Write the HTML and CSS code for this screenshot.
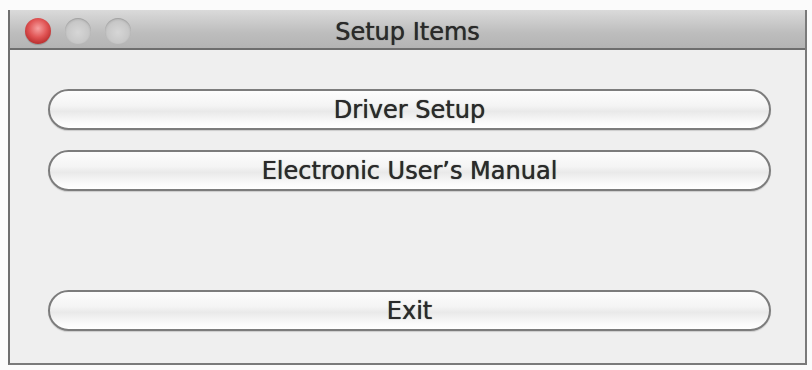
FILE: index.html
```html
<!DOCTYPE html>
<html>
<head>
<meta charset="utf-8">
<link rel="stylesheet" href="styles.css">
</head>
<body>
<div class="window">
  <div class="titlebar">
    <div class="lights">
      <span class="light close"></span>
      <span class="light off"></span>
      <span class="light off"></span>
    </div>
    <div class="title">Setup Items</div>
  </div>
  <div class="content">
    <div class="button">Driver Setup</div>
    <div class="button">Electronic User’s Manual</div>
    <div class="spacer"></div>
    <div class="button">Exit</div>
  </div>
</div>
</body>
</html>
```
FILE: styles.css
```css
html, body {
  margin: 0;
  padding: 0;
  background: #fbfbfb;
  width: 812px;
  height: 370px;
  overflow: hidden;
  font-family: "DejaVu Sans", "Open Sans", sans-serif;
}
body {
  padding: 10px 5px 0 8px;
  box-sizing: border-box;
}
.window {
  width: 799px;
  height: 355px;
  box-sizing: border-box;
  border-left: 2px solid #6f6f6f;
  border-right: 2px solid #7a7a7a;
  border-bottom: 2px solid #7a7a7a;
  background: #efefef;
  display: flex;
  flex-direction: column;
}
.titlebar {
  height: 40px;
  box-sizing: border-box;
  border-bottom: 2px solid #6e6e6e;
  background: linear-gradient(#dadada, #bdbdbd 60%, #b4b4b4);
  position: relative;
  display: flex;
  align-items: center;
  padding-top: 3px;
}
.lights {
  display: flex;
  gap: 14px;
  padding-left: 15px;
}
.light {
  width: 26px;
  height: 26px;
  border-radius: 50%;
  box-sizing: border-box;
}
.light.close {
  background: radial-gradient(circle at 50% 40%, #f7a0a0 0%, #e05454 45%, #b52a2a 80%, #8e1d1d 100%);
  box-shadow: 0 1px 1px rgba(0,0,0,0.2);
}
.light.off {
  background: radial-gradient(circle at 50% 55%, #d6d6d6 0%, #c8c8c8 55%, #aaaaaa 85%, #a2a2a2 100%);
  box-shadow: inset 0 1px 1px rgba(0,0,0,0.12);
}
.title {
  position: absolute;
  left: 0;
  right: 0;
  top: 8px;
  text-align: center;
  font-size: 24px;
  line-height: 28px;
  color: #2a2a2a;
  text-shadow: 0 0 0.8px #2a2a2a;
}
.content {
  flex: 1;
  display: flex;
  flex-direction: column;
  padding: 39px 34px 0 38px;
  gap: 20px;
}
.spacer {
  height: 59px;
}
.button {
  height: 41px;
  box-sizing: border-box;
  border: 2px solid #7c7c7c;
  border-radius: 21px;
  background: linear-gradient(#fdfdfd 0%, #f4f4f4 40%, #e9e9e9 55%, #fafafa 85%, #ffffff 100%);
  box-shadow: 0 1px 1px rgba(0,0,0,0.15);
  display: flex;
  align-items: center;
  justify-content: center;
  font-size: 24px;
  line-height: 28px;
  color: #2a2a2a;
  text-shadow: 0 0 0.8px #2a2a2a;
}
```
